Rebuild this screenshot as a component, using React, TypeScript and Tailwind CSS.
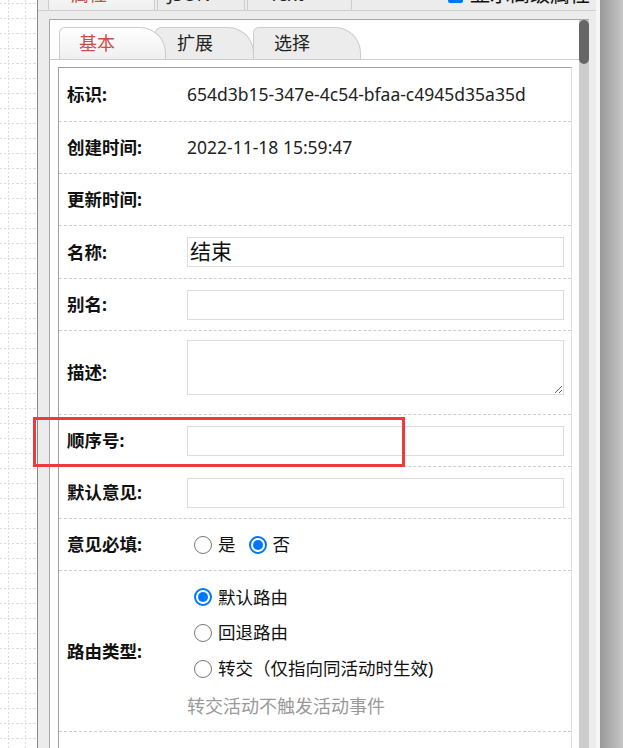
import React from 'react'

const font = "font-['Noto_Sans','Noto_Sans_CJK_SC',sans-serif]"

function Radio({ checked, label }: { checked?: boolean; label: string }) {
	return (
		<span className="inline-flex items-center">
			{checked ? (
				<span className="w-[18px] h-[18px] rounded-full border-2 border-[#0075ff] bg-white flex items-center justify-center">
					<span className="w-[10px] h-[10px] rounded-full bg-[#0075ff]" />
				</span>
			) : (
				<span className="w-[18px] h-[18px] rounded-full border-[1.5px] border-[#767676] bg-white" />
			)}
			<span className="ml-[6px] text-[17.5px] text-[#111]">{label}</span>
		</span>
	)
}

function Row({ label, children, className = '' }: { label: string; children?: React.ReactNode; className?: string }) {
	return (
		<div className={`flex items-center border-b border-dashed border-[#ccc] ${className}`}>
			<div className="w-[128px] shrink-0 pl-[8px] font-bold text-[17.5px] text-[#111]">{label}</div>
			<div className="flex-1 pr-[7px] text-[17.5px] text-[#222]">{children}</div>
		</div>
	)
}

function Field({ value = '' }: { value?: string }) {
	return (
		<input
			readOnly
			value={value}
			className="block w-full h-[30px] border border-[#ddd] bg-white px-[2px] text-[21px] text-[#111] outline-none"
		/>
	)
}

function Tab({ label, active, className }: { label: string; active?: boolean; className: string }) {
	return (
		<div
			className={`relative h-[32px] shrink-0 border border-b-0 border-[#ccc] rounded-tl-[6px] rounded-tr-[26px] flex items-center text-[18px] ${
				active ? 'bg-gradient-to-b from-white to-[#efefef] text-[#c9504a]' : 'bg-[#ececec] text-[#222]'
			} ${className}`}>
			{label}
		</div>
	)
}

export default function App() {
	return (
		<div className={`w-[623px] h-[748px] overflow-hidden flex bg-white relative ${font}`}>
			{/* canvas grid on the left */}
			<div className="w-[37px] h-full shrink-0">
				<svg width="37" height="748">
					<defs>
						<pattern id="grid" width="17" height="15" patternUnits="userSpaceOnUse" x="0" y="3">
							<path d="M0 0.5H17" stroke="#dcdcdc" strokeDasharray="2 2" />
							<path d="M8.5 0V15" stroke="#dcdcdc" strokeDasharray="2 2" />
						</pattern>
					</defs>
					<rect width="37" height="748" fill="url(#grid)" />
				</svg>
			</div>
			<div className="w-px bg-[#8a8a8a] shrink-0" />

			{/* property panel */}
			<div className="w-[558px] shrink-0 bg-[#ececec] flex flex-col">
				<div className="h-[11px] shrink-0 overflow-hidden border-b border-[#cfcfcf] flex items-end">
					<div className="flex items-end h-[10px]">
						<Tab label="属性" active className="w-[107px] ml-[10px] pl-[22px] z-30 h-[30px]" />
						<Tab label="JSON" className="w-[88px] ml-[2px] pl-[10px] z-20 h-[30px]" />
						<Tab label="Text" className="w-[105px] ml-[2px] pl-[21px] z-10 h-[30px]" />
					</div>
					<div className="flex-1" />
					<div className="flex items-end h-[10px] mr-[6px]">
						<div className="flex items-center h-[30px]">
							<span className="w-[15px] h-[15px] rounded-[2px] bg-[#0075ff]" />
							<span className="ml-[7px] text-[20px] text-[#111]">显示高级属性</span>
						</div>
					</div>
				</div>

				<div className="flex-1 min-h-0 pt-[8px] pl-[11px] pr-[7px]">
					<div className="h-full bg-white border-t border-l border-[#a8a8a8] flex">
						<div className="flex-1 min-w-0">
							{/* inner tabs */}
							<div className="flex items-end h-[40px] pl-[9px] border-b border-[#cfcfcf]">
								<Tab label="基本" active className="w-[107px] pl-[19px] z-30" />
								<Tab label="扩展" className="w-[99px] -ml-[11px] pl-[21px] z-20" />
								<Tab label="选择" className="w-[108px] -ml-[1px] pl-[20px] z-10" />
							</div>

							{/* form */}
							<div className="mt-[7px] ml-[8px] mr-[7px] border-t border-l border-[#a0a0a0] border-r border-r-[#dedede]">
								<Row label="标识:" className="h-[54px]">
									654d3b15-347e-4c54-bfaa-c4945d35a35d
								</Row>
								<Row label="创建时间:" className="h-[52px]">
									2022-11-18 15:59:47
								</Row>
								<Row label="更新时间:" className="h-[52px]" />
								<Row label="名称:" className="h-[53px]">
									<Field value="结束" />
								</Row>
								<Row label="别名:" className="h-[52px]">
									<Field />
								</Row>
								<Row label="描述:" className="h-[84px]">
									<textarea
										readOnly
										className="block w-full h-[55px] -mt-[10px] border border-[#ddd] bg-white outline-none resize"
									/>
								</Row>
								<Row label="顺序号:" className="h-[52px]">
									<Field />
								</Row>
								<Row label="默认意见:" className="h-[52px]">
									<Field />
								</Row>
								<Row label="意见必填:" className="h-[52px]">
									<div className="flex items-center pl-[7px] gap-[13px]">
										<Radio label="是" />
										<Radio checked label="否" />
									</div>
								</Row>
								<Row label="路由类型:" className="h-[161px]">
									<div className="flex flex-col pt-[3px]">
										<div className="h-[35px] flex items-center pl-[7px]">
											<Radio checked label="默认路由" />
										</div>
										<div className="h-[36px] flex items-center pl-[7px]">
											<Radio label="回退路由" />
										</div>
										<div className="h-[36px] flex items-center pl-[7px]">
											<Radio label="转交（仅指向同活动时生效)" />
										</div>
										<div className="h-[38px] mt-[1px] flex items-center text-[18px] text-[#999]">
											转交活动不触发活动事件
										</div>
									</div>
								</Row>
								<div className="flex h-[52px] pt-[13px]">
									<div className="w-[128px] shrink-0" />
									<div className="flex items-start pl-[7px] gap-[13px]">
										<Radio label="是" />
										<Radio checked label="否" />
									</div>
								</div>
							</div>
						</div>

						{/* scrollbar */}
						<div className="w-[10px] shrink-0 bg-[#cdcdcd] relative">
							<div className="h-[44px] w-full rounded-full bg-[#666]" />
						</div>
					</div>
				</div>
			</div>

			<div className="w-[4px] shrink-0 bg-[#f6f6f6]" />
			<div className="flex-1 bg-gradient-to-r from-[#9a9a9a] to-[#c6c6c6]" />

			{/* highlight annotation */}
			<div className="absolute left-[33px] top-[417px] w-[372px] h-[50px] border-[3px] border-[#f03a3a]" />
		</div>
	)
}
